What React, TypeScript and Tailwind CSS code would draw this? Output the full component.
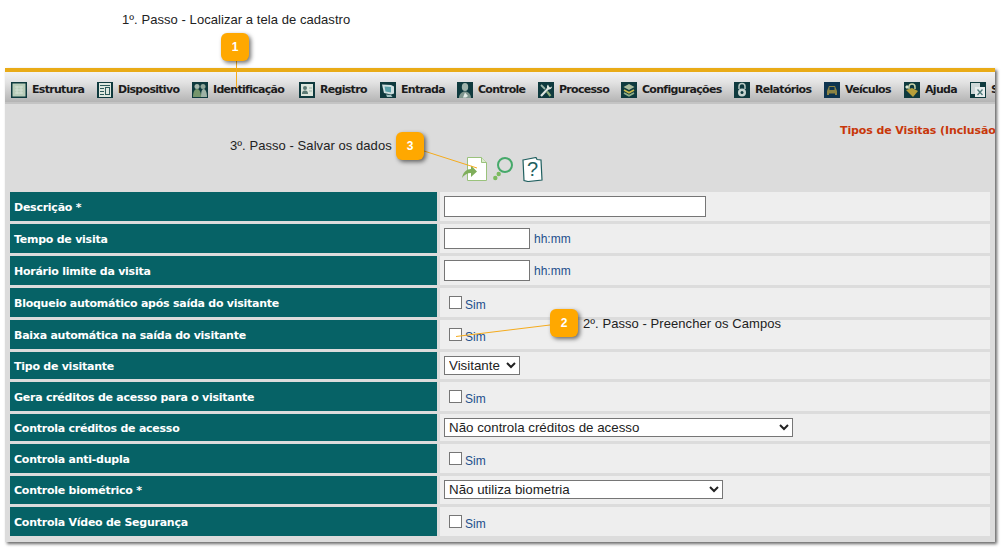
import type { ReactNode } from 'react';

const arial = "font-['Liberation_Sans',Arial,sans-serif]";

function Tile({ children, bg = '#0f3a3e' }: { children: ReactNode; bg?: string }) {
  return (
    <svg width="16" height="16" viewBox="0 0 16 16" className="shrink-0" style={{ background: bg }}>
      {children}
    </svg>
  );
}

const menu: { label: string; width: string; icon: ReactNode }[] = [
  {
    label: 'Estrutura',
    width: 'w-[86px]',
    icon: (
      <Tile>
        <rect x="1.500" y="1.500" width="13" height="13" fill="#b9cdb9" />
        <path d="M4 5h8M4 8h8M4 11h8M6 4v8M10 4v8" stroke="#d3dfd3" strokeWidth="1" />
      </Tile>
    ),
  },
  {
    label: 'Dispositivo',
    width: 'w-[95px]',
    icon: (
      <Tile>
        <rect x="2" y="1" width="12" height="14" fill="#dfe8df" />
        <path d="M3 3.500h10M3 6.500h4M3 9.500h4M3 12.500h4" stroke="#2d5a5a" strokeWidth="1" />
        <rect x="8.500" y="5.500" width="4" height="7" fill="none" stroke="#2d5a5a" />
      </Tile>
    ),
  },
  {
    label: 'Identificação',
    width: 'w-[107px]',
    icon: (
      <Tile>
        <circle cx="5" cy="4.500" r="2.500" fill="#a5b7ac" />
        <circle cx="11" cy="4.500" r="2.500" fill="#8fa69a" />
        <path d="M1 15c0-5 1.500-8 4-8s4 3 4 8z" fill="#76966c" />
        <path d="M9 15c0-4 .5-8 2.500-8S15 10 15 15z" fill="#9db2a5" />
      </Tile>
    ),
  },
  {
    label: 'Registro',
    width: 'w-[81px]',
    icon: (
      <Tile>
        <rect x="2" y="2" width="12" height="12" fill="#dde6dd" />
        <circle cx="6" cy="6" r="2" fill="#5b7a74" />
        <path d="M3 12c0-3 1.500-3.500 3-3.500S9 9 9 12z" fill="#5b7a74" />
        <path d="M10 6h3M10 9h3" stroke="#9ab3aa" />
      </Tile>
    ),
  },
  {
    label: 'Entrada',
    width: 'w-[77px]',
    icon: (
      <Tile>
        <path d="M2 2.500l9 .5 3 1.500v7l-3 1-7-1.500z" fill="#cfe0e0" />
        <path d="M4.500 4.500l6.500.5v5.500l-5.500-1z" fill="#5aa0a8" />
        <path d="M6 12.500l5 .5 1.500 2H7z" fill="#a4c3c3" />
      </Tile>
    ),
  },
  {
    label: 'Controle',
    width: 'w-[81px]',
    icon: (
      <Tile>
        <ellipse cx="8" cy="5" rx="3.200" ry="4" fill="#9fb3ab" />
        <path d="M2 16c0-4 3-6.500 6-6.500s6 2.500 6 6.500z" fill="#7f968e" />
        <path d="M8 10.500l3 3.500-2 1.500H6z" fill="#e3ebe7" />
      </Tile>
    ),
  },
  {
    label: 'Processo',
    width: 'w-[83px]',
    icon: (
      <Tile>
        <path d="M3 14L10 6.500" stroke="#dfe6e0" strokeWidth="2.200" />
        <path d="M10 2.500a3 3 0 00.500 5 3 3 0 003.500-3l-2 1-1-1z" fill="#dfe6e0" />
        <path d="M3 3l4 4" stroke="#9fb7aa" strokeWidth="1.800" />
        <path d="M9 9.500l3.500 4.500" stroke="#8fae7c" strokeWidth="2.200" />
      </Tile>
    ),
  },
  {
    label: 'Configurações',
    width: 'w-[113px]',
    icon: (
      <Tile>
        <path d="M8 2l5.500 3L8 8 2.500 5z" fill="#a9bb9c" />
        <path d="M3 8l5 2.700L13 8" fill="none" stroke="#c9b94a" strokeWidth="1.800" />
        <path d="M3 11l5 2.700 5-2.700" fill="none" stroke="#8fb08a" strokeWidth="1.800" />
      </Tile>
    ),
  },
  {
    label: 'Relatórios',
    width: 'w-[90px]',
    icon: (
      <Tile>
        <path d="M5 7V4.500a3 3 0 016 0V7" fill="none" stroke="#b9c9c4" strokeWidth="1.500" />
        <circle cx="8" cy="10.500" r="4" fill="#c7d4d0" />
        <circle cx="8" cy="10.500" r="1.500" fill="#0f3a3e" />
      </Tile>
    ),
  },
  {
    label: 'Veículos',
    width: 'w-[80px]',
    icon: (
      <Tile bg="#0e3550">
        <path d="M5 4h6l2 5v4h-2v-1.500H5V13H3V9z" fill="#8c8444" />
        <rect x="5.500" y="5" width="5" height="3" fill="#0e3550" />
      </Tile>
    ),
  },
  {
    label: 'Ajuda',
    width: 'w-[66px]',
    icon: (
      <Tile>
        <path d="M5 7V5a3 3 0 016 0v2" fill="none" stroke="#c9d3a8" strokeWidth="1.500" />
        <path d="M2 8l6-2 6 3-5 6z" fill="#b79f3a" />
        <path d="M1 5l2-2 2 2-2 2z" fill="#dbe6cf" />
      </Tile>
    ),
  },
  {
    label: 'Sair',
    width: 'w-[40px]',
    icon: (
      <Tile>
        <rect x="1" y="1" width="9" height="11" fill="#cfd8d8" />
        <rect x="5" y="5" width="10" height="10" fill="#e8eded" />
        <path d="M7.500 7.500l5 5.500M12.500 7.500l-5 5.500" stroke="#4f7a7a" strokeWidth="1.300" />
      </Tile>
    ),
  },
];

function Sim() {
  return (
    <label className="mt-[8px] flex items-start">
      <input type="checkbox" className="ml-[5px] h-[13px] w-[13px] m-0 appearance-none border border-[#767676] bg-white" />
      <span className={`ml-[3px] mt-[2px] text-[12px] leading-[14px] text-[#1d4f8c] ${arial}`}>Sim</span>
    </label>
  );
}

function Row({ label, h, children }: { label: string; h: string; children: ReactNode }) {
  return (
    <div className={`flex gap-[3px] ${h}`}>
      <div className="flex w-[427px] shrink-0 items-center bg-[#066266] pl-1 pt-[3px] text-[11px] font-bold tracking-[-0.25px] text-white font-['DejaVu_Sans',Verdana,sans-serif]">
        {label}
      </div>
      <div className="flex-1 bg-[#eeeeee] pl-1">{children}</div>
    </div>
  );
}

const selectCls = `block h-[19px] border border-[#767676] bg-white text-[13.33px] leading-none text-[#222] ${arial}`;
const inputCls = 'block h-[21px] border border-[#767676] bg-white';
const noteCls = `text-[13px] leading-[14px] tracking-[0.06px] text-[#222] ${arial}`;

function Hhmm() {
  return <span className={`ml-1 text-[12px] text-[#1d4f8c] ${arial}`}>hh:mm</span>;
}

function Callout({ n, pos }: { n: number; pos: string }) {
  return (
    <div
      className={`absolute ${pos} flex h-[28px] w-[28px] items-center justify-center rounded-[6px] bg-[#ffa800] text-[12px] font-bold text-white shadow-[2px_2px_4px_rgba(0,0,0,0.55)] ${arial}`}
    >
      {n}
    </div>
  );
}

export default function App() {
  return (
    <div className="relative h-[551px] w-[1004px] overflow-hidden bg-white">
      <div className={`h-[68px] pl-[122px] pt-[13px] ${noteCls}`}>1º. Passo - Localizar a tela de cadastro</div>

      <div className="ml-[5px] h-[474px] w-[990px] overflow-hidden border-t-4 border-[#e9ab17] bg-[#dcdcdc] shadow-[2px_2px_3px_rgba(0,0,0,0.6)]">
        <nav className="flex h-[32px] items-center whitespace-nowrap border-b-2 border-[#c4c4c4] bg-[linear-gradient(#f2f2f2,#e2e2e2_35%,#c9c9c9_70%,#b4b4b4)] pl-[6px] pt-[5px]">
          {menu.map((m) => (
            <div key={m.label} className={`flex shrink-0 items-center gap-[5px] ${m.width}`}>
              {m.icon}
              <span className="mt-[1px] text-[11px] font-bold tracking-[-0.7px] text-[#1c1c1c] font-['DejaVu_Sans',Verdana,sans-serif]">{m.label}</span>
            </div>
          ))}
        </nav>

        <div className="h-[88px]">
          <div className="whitespace-nowrap pl-[835px] pt-[20px] text-[11px] font-bold leading-[14px] tracking-[-0.1px] text-[#c8370a] font-['DejaVu_Sans',Verdana,sans-serif]">
            Tipos de Visitas (Inclusão)
          </div>
          <div className="ml-[457px] mt-[19px] flex items-start">
            <svg width="25" height="25" viewBox="0 0 25 25" className="shrink-0">
              <path d="M5.500.500h14l5 5v18h-19z" fill="#fff" stroke="#9ac27c" />
              <path d="M19.500.500v5h5" fill="#dcebcf" stroke="#9ac27c" />
              <path d="M0 21c1-6 5-9 9-9V8.500l6 6-6 5.500v-4c-4 0-7 2-9 5z" fill="#7fae5b" />
            </svg>
            <svg width="24" height="25" viewBox="0 0 24 25" className="ml-[6px] shrink-0">
              <circle cx="12" cy="8" r="7" fill="none" stroke="#46a96a" strokeWidth="2" />
              <circle cx="5.700" cy="17" r="2.200" fill="#7cba5f" />
              <circle cx="2.300" cy="21" r="2.200" fill="#7cba5f" />
            </svg>
            <svg width="21" height="25" viewBox="0 0 21 25" className="ml-[5px] shrink-0">
              <path d="M1 3l13-2.500 1 2 4 .5 1 20-14 1.500-4-1z" fill="#fff" stroke="#1f5f5f" strokeWidth="1.200" />
              <text x="10.500" y="19" textAnchor="middle" fontSize="20" fill="#1f5f5f" fontFamily="Liberation Sans">?</text>
            </svg>
          </div>
        </div>

        <div className="mx-[5px] flex flex-col gap-[3px]">
          <Row label="Descrição *" h="h-[29px]">
            <input className={`${inputCls} mt-1 w-[262px]`} />
          </Row>
          <Row label="Tempo de visita" h="h-[29px]">
            <div className="mt-1 flex items-center">
              <input className={`${inputCls} w-[86px]`} />
              <Hhmm />
            </div>
          </Row>
          <Row label="Horário limite da visita" h="h-[29px]">
            <div className="mt-1 flex items-center">
              <input className={`${inputCls} w-[86px]`} />
              <Hhmm />
            </div>
          </Row>
          <Row label="Bloqueio automático após saída do visitante" h="h-[29px]">
            <Sim />
          </Row>
          <Row label="Baixa automática na saída do visitante" h="h-[29px]">
            <Sim />
          </Row>
          <Row label="Tipo de visitante" h="h-[27px]">
            <select className={`${selectCls} mt-[4px] w-[76px]`} defaultValue="Visitante">
              <option>Visitante</option>
            </select>
          </Row>
          <Row label="Gera créditos de acesso para o visitante" h="h-[29px]">
            <Sim />
          </Row>
          <Row label="Controla créditos de acesso" h="h-[27px]">
            <select className={`${selectCls} mt-[4px] w-[349px]`} defaultValue="Não controla créditos de acesso">
              <option>Não controla créditos de acesso</option>
            </select>
          </Row>
          <Row label="Controla anti-dupla" h="h-[29px]">
            <Sim />
          </Row>
          <Row label="Controle biométrico *" h="h-[28px]">
            <select className={`${selectCls} mt-[4px] w-[279px]`} defaultValue="Não utiliza biometria">
              <option>Não utiliza biometria</option>
            </select>
          </Row>
          <Row label="Controla Vídeo de Segurança" h="h-[29px]">
            <Sim />
          </Row>
        </div>
      </div>

      {/* anotacoes por cima da tela */}
      <svg className="pointer-events-none absolute left-0 top-0" width="1004" height="551">
        <path d="M236.500 60V88M424 151L477 168M550 325L456 336.500" stroke="#f5ab1c" strokeWidth="1" fill="none" />
      </svg>
      <Callout n={1} pos="left-[221px] top-[33px]" />
      <Callout n={3} pos="left-[396px] top-[132px]" />
      <Callout n={2} pos="left-[550px] top-[309px]" />
      <div className={`absolute left-[230px] top-[139px] ${noteCls}`}>3º. Passo - Salvar os dados</div>
      <div className={`absolute left-[583px] top-[317px] ${noteCls}`}>2º. Passo - Preencher os Campos</div>
    </div>
  );
}
